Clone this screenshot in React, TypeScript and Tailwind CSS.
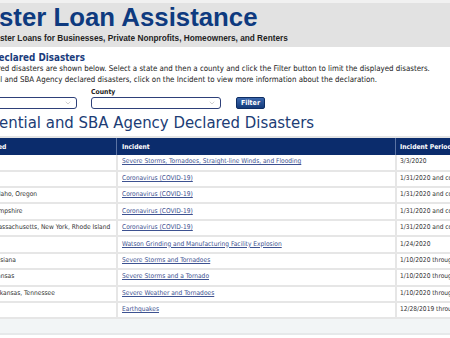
import { ChevronDown } from "lucide-react";

type Disaster = {
  states: string;
  incident: string;
  period: string;
};

const disasters: Disaster[] = [
  {
    states: "Tennessee",
    incident: "Severe Storms, Tornadoes, Straight-line Winds, and Flooding",
    period: "3/3/2020",
  },
  { states: "Washington", incident: "Coronavirus (COVID-19)", period: "1/31/2020 and continuing" },
  { states: "Alaska, Utah, Idaho, Oregon", incident: "Coronavirus (COVID-19)", period: "1/31/2020 and continuing" },
  { states: "Maine, New Hampshire", incident: "Coronavirus (COVID-19)", period: "1/31/2020 and continuing" },
  {
    states: "Connecticut, Massachusetts, New York, Rhode Island",
    incident: "Coronavirus (COVID-19)",
    period: "1/31/2020 and continuing",
  },
  { states: "Texas", incident: "Watson Grinding and Manufacturing Facility Explosion", period: "1/24/2020" },
  { states: "Oklahoma, Louisiana", incident: "Severe Storms and Tornadoes", period: "1/10/2020 through 1/11/2020" },
  { states: "New Mexico, Kansas", incident: "Severe Storms and a Tornado", period: "1/10/2020 through 1/11/2020" },
  {
    states: "Connecticut, Arkansas, Tennessee",
    incident: "Severe Weather and Tornadoes",
    period: "1/10/2020 through 1/11/2020",
  },
  { states: "Puerto Rico", incident: "Earthquakes", period: "12/28/2019 through 1/31/2020" },
];

function SelectBox() {
  return (
    <div className="flex h-[12px] w-[130px] items-center justify-end rounded-[3px] border-[1.5px] border-[#2e4079] bg-white pr-[4px]">
      <ChevronDown size={8} strokeWidth={1.5} className="text-[#a0a0a0]" />
    </div>
  );
}

export default function App() {
  return (
    <div className="relative h-[338px] w-[450px] overflow-hidden bg-white">
      <header className="h-[47px] border-t-[3px] border-[#f1f1f1] bg-[#e2e2e2] font-['Liberation_Sans',Arial,sans-serif] whitespace-nowrap">
        <h1 className="ml-[-55.5px] pt-[2px] text-[25.8px] leading-none font-bold text-[#0e3a7f]">
          Disaster Loan Assistance
        </h1>
        <p className="mt-[3.5px] ml-[-17.5px] text-[8.25px] leading-[10px] font-bold text-[#222]">
          Disaster Loans for Businesses, Private Nonprofits, Homeowners, and Renters
        </p>
      </header>

      <main className="ml-[-46px] font-['DejaVu_Sans_Condensed','Liberation_Sans',sans-serif] whitespace-nowrap text-[#222]">
        <h2 className="mt-[5.4px] text-[9.8px] leading-[12px] font-bold text-[#1b3c7c]">
          Search Declared Disasters
        </h2>
        <p className="text-[7.85px] leading-[10.5px]">
          All the declared disasters are shown below. Select a state and then a county and click the Filter
          button to limit the displayed disasters.
        </p>
        <p className="text-[7.85px] leading-[10.5px]">
          A Presidential and SBA Agency declared disasters, click on the Incident to view more information
          about the declaration.
        </p>

        <div className="mt-[3px] ml-[-7px] flex items-end">
          <div className="flex flex-col">
            <label className="mb-[1px] text-[6.8px] leading-[8px] font-bold">State</label>
            <SelectBox />
          </div>
          <div className="ml-[14px] flex flex-col">
            <label className="mb-[1px] text-[6.8px] leading-[8px] font-bold">County</label>
            <SelectBox />
          </div>
          <button className="ml-[15px] flex h-[12px] w-[29px] items-center justify-center rounded-[2px] border border-[#0e2d63] bg-gradient-to-b from-[#3b67ac] to-[#143b7b] text-[7px] leading-none font-bold text-white">
            Filter
          </button>
        </div>

        <h2 className="mt-[3.5px] text-[16.6px] leading-[20px] font-normal text-[#203c75]">
          Presidential and SBA Agency Declared Disasters
        </h2>

        <div className="mt-[3px] ml-[-5px] w-[646px] border-t-2 border-[#e4e4e4] text-[6.6px]">
          <div className="grid h-[17.3px] grid-cols-[167px_279px_200px] items-center bg-[#0b2c6c] text-[6.7px] font-bold text-white">
            <div className="px-[5px]">States Affected</div>
            <div className="flex h-full items-center border-l border-[#5b73a3] px-[5px]">Incident</div>
            <div className="flex h-full items-center border-l border-[#5b73a3] px-[4px]">Incident Period</div>
          </div>
          {disasters.map((d, i) => (
            <div
              key={i}
              className="grid h-[16.43px] grid-cols-[167px_279px_200px] border-b-2 border-[#e6e6e6] text-[#333]"
            >
              <div className="flex items-center overflow-hidden px-[5px]">{d.states}</div>
              <div className="flex items-center border-l-2 border-[#e6e6e6] px-[4px]">
                <a href="#" className="text-[#3d5291] underline">
                  {d.incident}
                </a>
              </div>
              <div className="flex items-center border-l-2 border-[#e6e6e6] px-[3px]">{d.period}</div>
            </div>
          ))}
          <div className="h-[16px] border-b-2 border-[#e6e9ea] bg-[#f2f5f6]" />
        </div>
      </main>
    </div>
  );
}
